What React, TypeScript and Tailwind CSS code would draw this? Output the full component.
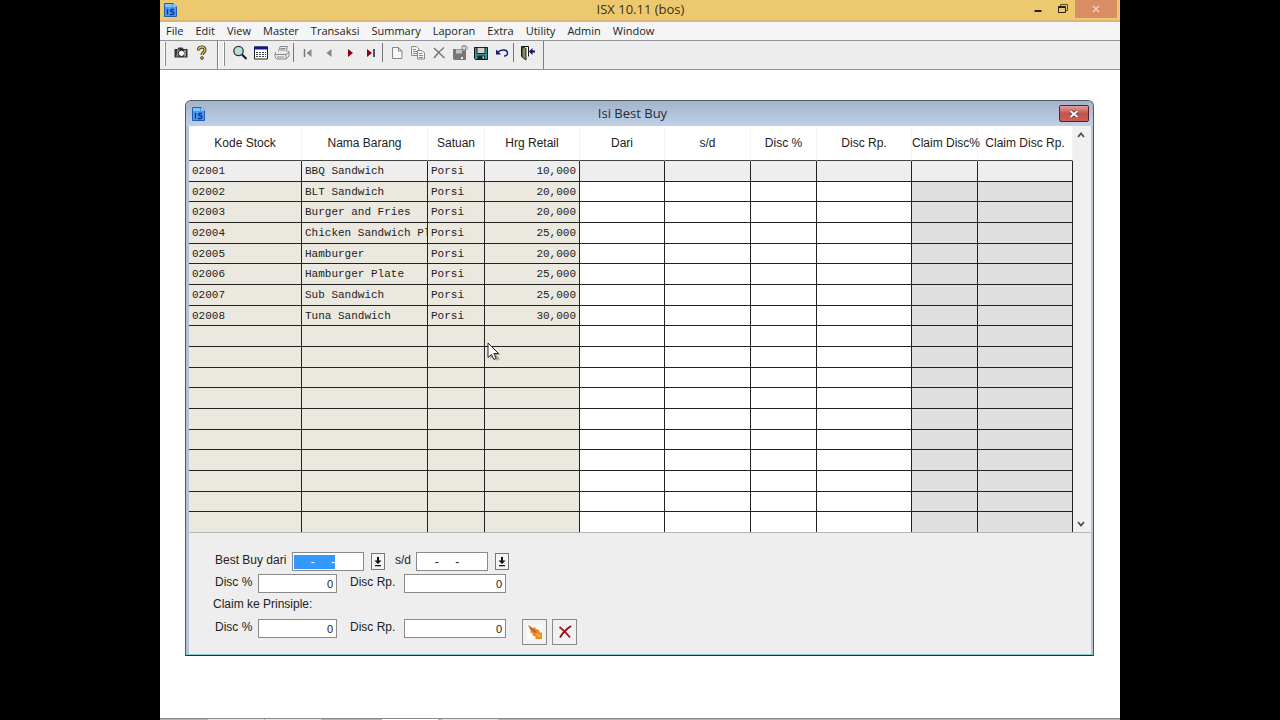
import { useEffect, useRef, type ReactNode } from 'react';

interface Stock {
  kode: string;
  nama: string;
  satuan: string;
  harga: string;
}

const stocks: Stock[] = [
  { kode: '02001', nama: 'BBQ Sandwich', satuan: 'Porsi', harga: '10,000' },
  { kode: '02002', nama: 'BLT Sandwich', satuan: 'Porsi', harga: '20,000' },
  { kode: '02003', nama: 'Burger and Fries', satuan: 'Porsi', harga: '20,000' },
  { kode: '02004', nama: 'Chicken Sandwich Pl', satuan: 'Porsi', harga: '25,000' },
  { kode: '02005', nama: 'Hamburger', satuan: 'Porsi', harga: '20,000' },
  { kode: '02006', nama: 'Hamburger Plate', satuan: 'Porsi', harga: '25,000' },
  { kode: '02007', nama: 'Sub Sandwich', satuan: 'Porsi', harga: '25,000' },
  { kode: '02008', nama: 'Tuna Sandwich', satuan: 'Porsi', harga: '30,000' },
];

const ROWS = 18;
const rows: (Stock | null)[] = Array.from({ length: ROWS }, (_, i) => stocks[i] ?? null);

const menus = ['File', 'Edit', 'View', 'Master', 'Transaksi', 'Summary', 'Laporan', 'Extra', 'Utility', 'Admin', 'Window'];

const columns = [
  { label: 'Kode Stock', width: 'w-[113px]' },
  { label: 'Nama Barang', width: 'w-[126px]' },
  { label: 'Satuan', width: 'w-[57px]' },
  { label: 'Hrg Retail', width: 'w-[95px]' },
  { label: 'Dari', width: 'w-[85px]' },
  { label: 's/d', width: 'w-[86px]' },
  { label: 'Disc %', width: 'w-[66px]' },
  { label: 'Disc Rp.', width: 'w-[95px]' },
  { label: 'Claim Disc%', width: 'w-[66px]' },
  { label: 'Claim Disc Rp.', width: 'w-[95px]' },
];

const EMPTY_DATE = '     -     -';

function AppIcon() {
  return (
    <svg width="13" height="14" viewBox="0 0 13 14" className="shrink-0">
      <path d="M.5.5h9l3 3v10H.5z" fill="#4a9be8" stroke="#1f5fae" />
      <path d="M9.500.5v3h3z" fill="#c4e2fb" />
      <path d="M1 1h7v3H1z" fill="#7fc0f5" />
      <path d="M3.500 6v5.500M10 6.500H7.500L6.500 7.500 7 8.500l2.500.5.5 1-1 1.500H6" fill="none" stroke="#0c2fa8" strokeWidth="1.300" />
    </svg>
  );
}

function Tool({ label, children }: { label: string; children: ReactNode }) {
  return (
    <button aria-label={label} className="flex h-[21px] w-[21px] items-center justify-center">
      <svg width="16" height="16" viewBox="0 0 16 16" fill="none">
        {children}
      </svg>
    </button>
  );
}

function Sep() {
  return <div className="mr-[3px] ml-px h-[19px] w-px bg-[#777]" />;
}

function Grip() {
  return <div className="h-[24px] w-[2px] border-r border-[#8a8a8a] bg-white" />;
}

function Toolbar() {
  return (
    <div className="flex h-[30px] border-y border-[#949494] bg-[#ededed]">
      <div className="flex items-start border-r border-[#7d7d7d] pt-px pr-[5px] pl-1">
        <Grip />
        <div className="flex pl-1">
          <Tool label="Foto">
            <path d="M1.500 4h3l1-1.500h4L10.500 4h4v8.500h-13z" fill="#333" />
            <path d="M4.500 4.500h2l-1 7h-2z" fill="#999" />
            <circle cx="8.500" cy="8.300" r="3.200" fill="#f4f4f4" stroke="#111" />
            <path d="M12 5v6.500" stroke="#eee" />
          </Tool>
          <Tool label="Bantuan">
            <path d="M4.500 5.500C4.500 1 11 1 11 5c0 2.500-3 2.500-3 5" stroke="#222" strokeWidth="3" />
            <path d="M4.500 5.500C4.500 1 11 1 11 5c0 2.500-3 2.500-3 5" stroke="#d8cf45" strokeWidth="1.400" />
            <circle cx="8" cy="13" r="1.400" fill="#d8cf45" stroke="#222" strokeWidth=".8" />
          </Tool>
        </div>
      </div>
      <div className="flex items-start border-x border-[#7d7d7d] border-l-white pt-px pr-[5px] pl-1">
        <Grip />
        <div className="flex items-center pl-1">
          <Tool label="Cari">
            <circle cx="6.500" cy="6" r="4.700" fill="#b9dcd9" stroke="#333" strokeWidth="1.300" />
            <path d="M10 9.500l4.500 4.500" stroke="#222" strokeWidth="2.200" />
          </Tool>
          <Tool label="Tabel">
            <path d="M1.500 2h13v12h-13z" fill="#fff" stroke="#222" />
            <path d="M1 1.500h14v3H1z" fill="#14148c" />
            <path d="M3 7.500h10M3 9.500h10M3 11.500h10" stroke="#444" strokeDasharray="2 1" />
          </Tool>
          <Tool label="Cetak">
            <path d="M4.500 6.500L6 1.500h7.500L12 6.500M2 7l-1 1v4l2 2h9l3-3V7l-1.500-1M1 9.500h11l3-2.500M12 9.500V14M6.500 3.500h5M6 5h5M3 12h7" stroke="#888" />
          </Tool>
          <Sep />
          <Tool label="Pertama">
            <path d="M4.500 4v8" stroke="#777" strokeWidth="1.500" />
            <path d="M11.500 4v8l-5-4z" fill="#888" />
          </Tool>
          <Tool label="Sebelumnya">
            <path d="M10.500 4v8l-5-4z" fill="#888" />
          </Tool>
          <Tool label="Berikutnya">
            <path d="M6 4v8l5-4z" fill="#8b0010" />
          </Tool>
          <Tool label="Terakhir">
            <path d="M4 4v8l5-4z" fill="#8b0010" />
            <path d="M11 4v8" stroke="#171740" strokeWidth="1.500" />
          </Tool>
          <Sep />
          <Tool label="Baru">
            <path d="M3.500 2.500h6l3.500 3.500v7.500H3.500zM9.500 2.500v3.500H13" stroke="#888" fill="#f6f6f6" />
          </Tool>
          <Tool label="Salin">
            <path d="M1.500 1.500h5l2.500 2.500v6.500H1.500z" stroke="#888" fill="#f4f4f4" />
            <path d="M7.500 5.500h4.500l2.500 2.500v6H7.500zM9 8.500h3M9 10.500h4M9 12.500h4M3 4.500h3M3 6.500h4M3 8.500h4" stroke="#888" fill="#f4f4f4" />
          </Tool>
          <Tool label="Hapus">
            <path d="M3 3l10.500 10M13 2.500C9 5.500 6 9 3 13" stroke="#777" strokeWidth="1.500" />
          </Tool>
          <Tool label="Simpan baru">
            <path d="M1 4h13v11H2l-1-1z" fill="#777" />
            <path d="M4 4.500h6v4H4z" fill="#c4c4c4" />
            <path d="M9 12h2v2H9z" fill="#eee" />
            <path d="M12 0v6M9.500 3h6" stroke="#777" strokeWidth="3" />
            <path d="M12 .5v5M10 3h5" stroke="#fff" />
          </Tool>
          <Tool label="Simpan">
            <path d="M1.500 2.500h13v12h-12l-1-1z" fill="#2f9a9a" stroke="#111" />
            <path d="M4 2.500h8v6H4z" fill="#d8d0d0" stroke="#222" />
            <path d="M4.500 10.500h7.500v4H4.500z" fill="#222" />
            <path d="M9.500 11.500h1.500v2H9.500z" fill="#eee" />
          </Tool>
          <Tool label="Batal">
            <path d="M3.500 7.500C6.500 4 13.500 4 13.500 8c0 2-1.500 3-3.500 3" stroke="#16167c" strokeWidth="1.400" />
            <path d="M2 4.500v5h5z" fill="#16167c" />
          </Tool>
          <Sep />
          <Tool label="Keluar">
            <path d="M1.500 11.500v-10h7v10" stroke="#111" fill="#fff" />
            <path d="M2 1.500l4 2V15l-4-3z" fill="#8c8a4d" stroke="#222" />
            <path d="M9 6.500l3.500-3.500v2.500H15v2h-2.500V10z" fill="#10106e" />
          </Tool>
        </div>
      </div>
    </div>
  );
}

function cellBg(row: number, col: number) {
  if (row === 0) return 'bg-[#eeeeee]';
  if (col < 4) return 'bg-[#ebe8df]';
  if (col < 8) return 'bg-white';
  return 'bg-[#dfdfdf]';
}

function StockTable() {
  return (
    <table className="h-[406px] w-full table-fixed border-separate border-spacing-0 bg-white">
      <colgroup>
        {columns.map((c) => (
          <col key={c.label} className={c.width} />
        ))}
      </colgroup>
      <thead>
        <tr className="h-[35px]">
          {columns.map((c) => (
            <th key={c.label} className="border-r border-b border-r-[#f4f4f4] border-b-[#444] p-0 text-xs font-normal whitespace-nowrap text-[#222]">
              {c.label}
            </th>
          ))}
        </tr>
      </thead>
      <tbody className="font-['Liberation_Mono',monospace] text-[11px] leading-4 text-[#222]">
        {rows.map((s, r) => {
          const values = s ? [s.kode, s.nama, s.satuan, s.harga] : [];
          return (
            <tr key={r}>
              {columns.map((c, i) => (
                <td
                  key={c.label}
                  className={`overflow-hidden border-r border-[#222] py-0 pl-[3px] whitespace-nowrap ${r < ROWS - 1 ? 'border-b' : ''} ${i === 3 ? 'pr-[3px] text-right' : ''} ${cellBg(r, i)}`}
                >
                  {values[i] ?? '\u00a0'}
                </td>
              ))}
            </tr>
          );
        })}
      </tbody>
    </table>
  );
}

const inputCls = 'h-[19px] border border-[#8a8a8a] bg-white outline-none';

function DropButton({ label }: { label: string }) {
  return (
    <button aria-label={label} className="mt-px ml-[7px] flex h-[17px] w-[14px] items-center justify-center border border-[#777] bg-[#f4f4f4]">
      <svg width="8" height="10" viewBox="0 0 8 10">
        <path d="M3 0h2v3.500h2.500L4 7 .5 3.500H3zM1 8h6v1.300H1z" fill="#111" />
      </svg>
    </button>
  );
}

function DiscFields({ prefix }: { prefix: string }) {
  return (
    <>
      <label htmlFor={`${prefix}-persen`} className="w-[43px]">Disc %</label>
      <input id={`${prefix}-persen`} defaultValue="0" className={`${inputCls} w-[79px] pr-[3px] text-right text-[11px]`} />
      <label htmlFor={`${prefix}-rp`} className="ml-[13px] w-[54px]">Disc Rp.</label>
      <input id={`${prefix}-rp`} defaultValue="0" className={`${inputCls} w-[102px] pr-[3px] text-right text-[11px]`} />
    </>
  );
}

function BestBuyForm() {
  const dari = useRef<HTMLInputElement>(null);

  useEffect(() => {
    dari.current?.focus();
    dari.current?.select();
  }, []);

  return (
    <form className="flex flex-col gap-[3px] bg-[#eeeeee] pt-[19px] pb-[9px] pl-[26px] text-xs leading-4 text-[#222]" onSubmit={(e) => e.preventDefault()}>
      <div className="flex h-[19px] items-start">
        <label htmlFor="dari" className="w-[77px]">Best Buy dari</label>
        <input ref={dari} id="dari" defaultValue={EMPTY_DATE} className={`${inputCls} w-[72px] pl-px selection:bg-[#3399ff] selection:text-white`} />
        <DropButton label="Pilih tanggal dari" />
        <label htmlFor="sampai" className="ml-[10px] w-[21px]">s/d</label>
        <input id="sampai" defaultValue={EMPTY_DATE} className={`${inputCls} w-[72px] pl-px`} />
        <DropButton label="Pilih tanggal s/d" />
      </div>
      <div className="flex h-[19px] items-start">
        <DiscFields prefix="disc" />
      </div>
      <p className="-ml-[2px] h-5">Claim ke Prinsiple:</p>
      <div className="flex items-start">
        <DiscFields prefix="claim" />
        <button aria-label="Proses" className="ml-4 flex h-[26px] w-[25px] items-center justify-center border border-[#8a8a8a] bg-[#f1f1f1]">
          <svg width="16" height="16" viewBox="0 0 16 16">
            <path d="M0 0h16v16H0z" fill="#fafafa" />
            <path d="M1 1l5 3 2-1 1 2 3 1 1 3 2-1v7H8l1-2-4-2 1-1-3-2 1-1z" fill="#f08a1c" />
            <path d="M1 1l5 4 4 3-2 1-4-3z" fill="#c9573a" />
            <path d="M9 9l3 1 2 3h-3z" fill="#ffb42e" />
          </svg>
        </button>
        <button aria-label="Hapus" className="ml-[5px] flex h-[26px] w-[25px] items-center justify-center border border-[#8a8a8a] bg-[#f1f1f1]">
          <svg width="14" height="14" viewBox="0 0 14 14" fill="none">
            <path d="M1.500 2C5 4.500 9 8.500 12 12.500" stroke="#b01020" strokeWidth="1.800" />
            <path d="M13 1C8.500 4 4.500 8 2 12.500" stroke="#8b0a1a" strokeWidth="1.800" />
          </svg>
        </button>
      </div>
    </form>
  );
}

function BestBuyWindow() {
  return (
    <section className="relative mt-[30px] mr-[26px] ml-[25px] rounded-t-[6px] border border-[#4d5a66] border-b-[#16343a] bg-[#b4c3d6]">
      <header className="flex h-[25px] items-center rounded-t-[5px] bg-linear-to-b from-[#a5b3c9] to-[#bfd0e7] pr-1 pl-[6px]">
        <div className="flex flex-1">
          <AppIcon />
        </div>
        <h2 className="mr-4 font-['Open_Sans',sans-serif] text-[13px] text-[#222c3a]">Isi Best Buy</h2>
        <div className="flex flex-1 justify-end">
          <button aria-label="Tutup" className="flex h-[17px] w-[30px] items-center justify-center rounded-[2px] border border-[#5d1f25] bg-linear-to-b from-[#dca09c] via-[#c4524c] to-[#c9605a]">
            <svg width="10" height="8" viewBox="0 0 10 8">
              <path d="M1.500 1l7 6M8.500 1l-7 6" stroke="#4a3a3c" strokeWidth="3.400" />
              <path d="M1.500 1l7 6M8.500 1l-7 6" stroke="#fff" strokeWidth="2" />
            </svg>
          </button>
        </div>
      </header>
      <div className="border-b border-[#8ccbd6] pr-[2px] pl-[3px]">
        <div className="flex border-b border-[#b5b5b5]">
          <div className="min-w-0 flex-1">
            <StockTable />
          </div>
          <div className="flex w-[18px] flex-col justify-between bg-[#f0f0f0] pr-[2px]">
            <button aria-label="Gulir ke atas" className="flex h-[17px] items-center justify-center">
              <svg width="8" height="6" viewBox="0 0 8 6" fill="none">
                <path d="M1 5l3-3.500L7 5" stroke="#505050" strokeWidth="1.800" />
              </svg>
            </button>
            <button aria-label="Gulir ke bawah" className="flex h-[17px] items-center justify-center">
              <svg width="8" height="6" viewBox="0 0 8 6" fill="none">
                <path d="M1 1l3 3.500L7 1" stroke="#505050" strokeWidth="1.800" />
              </svg>
            </button>
          </div>
        </div>
        <BestBuyForm />
      </div>
      <svg className="absolute top-[241px] left-[301px]" width="14" height="20" viewBox="0 0 14 20">
        <path d="M3 3v14l4-3 3 5 3-2-3-4h4z" fill="#000" opacity=".25" />
        <path d="M1 1v14.500l3.500-3 2.300 5 2.400-1-2.300-5h4.600z" fill="#fff" stroke="#222" />
      </svg>
    </section>
  );
}

export default function App() {
  return (
    <div className="flex min-h-screen justify-center bg-black font-['Liberation_Sans',Arial,sans-serif]">
      <div className="flex w-3/4 flex-col bg-white">
        <header className="flex h-[22px] items-center border-b-2 border-[#d9b678] bg-[#ecc96f] pl-1">
          <div className="flex flex-1">
            <AppIcon />
          </div>
          <h1 className="font-['Open_Sans',sans-serif] text-[13px] text-[#3d3118]">ISX 10.11 (bos)</h1>
          <div className="flex flex-1 items-center justify-end self-start pr-[3px]">
            <button aria-label="Perkecil" className="flex h-[18px] w-[25px] items-center justify-center">
              <svg width="8" height="10" viewBox="0 0 8 10">
                <path d="M.5 6h7v2h-7z" fill="#222" />
              </svg>
            </button>
            <button aria-label="Pulihkan" className="flex h-[18px] w-[25px] items-center justify-center">
              <svg width="10" height="10" viewBox="0 0 10 10" fill="none">
                <path d="M2.500 2V.5h7v6H8" stroke="#5c4a20" />
                <path d="M.5 2.500h7v6h-7zM.5 3.500h7" stroke="#2c2410" />
              </svg>
            </button>
            <button aria-label="Tutup aplikasi" className="flex h-[18px] w-[42px] items-center justify-center bg-[#d98d62]">
              <svg width="8" height="8" viewBox="0 0 8 8">
                <path d="M1 1l6 6M7 1L1 7" stroke="#f0cdb5" strokeWidth="1.600" />
              </svg>
            </button>
          </div>
        </header>
        <nav className="flex h-[18px] items-center gap-3 bg-[#f5f5f5] pl-[6px] font-['Open_Sans',sans-serif] text-[11px] text-[#222]">
          {menus.map((m) => (
            <button key={m}>{m}</button>
          ))}
        </nav>
        <Toolbar />
        <main className="flex-1">
          <BestBuyWindow />
        </main>
        <footer className="flex h-[2px] border-t border-[#8c8c84] bg-[#b4b4a8] pl-12">
          <div className="h-px w-14 bg-[#e6e6dc]" />
          <div className="ml-px h-px w-14 bg-[#e6e6dc]" />
          <div className="ml-[61px] h-px w-14 bg-white" />
          <div className="ml-1 h-px w-14 bg-[#e6e6dc]" />
        </footer>
      </div>
    </div>
  );
}
